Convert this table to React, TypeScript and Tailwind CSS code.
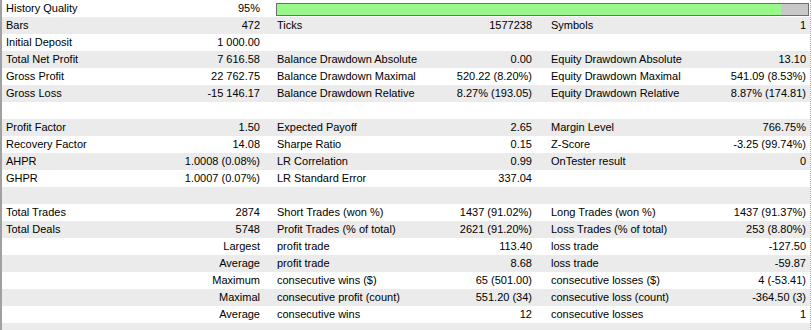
const rows: string[][] = [
  ['History Quality', '95%'],
  ['Bars', '472', 'Ticks', '1577238', 'Symbols', '1'],
  ['Initial Deposit', '1 000.00', '', '', '', ''],
  ['Total Net Profit', '7 616.58', 'Balance Drawdown Absolute', '0.00', 'Equity Drawdown Absolute', '13.10'],
  ['Gross Profit', '22 762.75', 'Balance Drawdown Maximal', '520.22 (8.20%)', 'Equity Drawdown Maximal', '541.09 (8.53%)'],
  ['Gross Loss', '-15 146.17', 'Balance Drawdown Relative', '8.27% (193.05)', 'Equity Drawdown Relative', '8.87% (174.81)'],
  ['', '', '', '', '', ''],
  ['Profit Factor', '1.50', 'Expected Payoff', '2.65', 'Margin Level', '766.75%'],
  ['Recovery Factor', '14.08', 'Sharpe Ratio', '0.15', 'Z-Score', '-3.25 (99.74%)'],
  ['AHPR', '1.0008 (0.08%)', 'LR Correlation', '0.99', 'OnTester result', '0'],
  ['GHPR', '1.0007 (0.07%)', 'LR Standard Error', '337.04', '', ''],
  ['', '', '', '', '', ''],
  ['Total Trades', '2874', 'Short Trades (won %)', '1437 (91.02%)', 'Long Trades (won %)', '1437 (91.37%)'],
  ['Total Deals', '5748', 'Profit Trades (% of total)', '2621 (91.20%)', 'Loss Trades (% of total)', '253 (8.80%)'],
  ['', 'Largest', 'profit trade', '113.40', 'loss trade', '-127.50'],
  ['', 'Average', 'profit trade', '8.68', 'loss trade', '-59.87'],
  ['', 'Maximum', 'consecutive wins ($)', '65 (501.00)', 'consecutive losses ($)', '4 (-53.41)'],
  ['', 'Maximal', 'consecutive profit (count)', '551.20 (34)', 'consecutive loss (count)', '-364.50 (3)'],
  ['', 'Average', 'consecutive wins', '12', 'consecutive losses', '1'],
  ['', '', '', '', '', ''],
];

const Cell = ({ label, value, w, pr }: { label: string; value: string; w: string; pr: string }) => (
  <div className={`flex ${w} shrink-0 justify-between pl-[4px] ${pr} whitespace-nowrap`}>
    <span>{label}</span>
    <span>{value}</span>
  </div>
);

export default function App() {
  return (
    <div className="w-[812px] h-[330px] overflow-hidden bg-white font-['Liberation_Sans',Arial,sans-serif] text-[11px] text-black">
      <div className="w-[811px] border-l-2 border-solid border-[#a0a0a0]">
        <div className="border-r border-dotted border-[#a8a8a8]">
          {rows.map((r, i) => (
            <div
              key={i}
              className={`flex h-[17px] items-center leading-[17px] ${i % 2 === 1 ? 'bg-[#ebebeb]' : 'bg-white'}`}
            >
              <Cell label={r[0]} value={r[1]} w="w-[271px]" pr="pr-[13px]" />
              {i === 0 ? (
                <div className="ml-[3px] mt-[1px] flex h-[13px] w-[533px] border border-[#6e6e6e] bg-[#c8c8c8]">
                  <div className="h-full w-[95%] bg-[#98f98a]" />
                </div>
              ) : (
                <>
                  <Cell label={r[2]} value={r[3]} w="w-[274px]" pr="pr-[15px]" />
                  <Cell label={r[4]} value={r[5]} w="w-[262px]" pr="pr-[3px]" />
                </>
              )}
            </div>
          ))}
        </div>
      </div>
    </div>
  );
}
